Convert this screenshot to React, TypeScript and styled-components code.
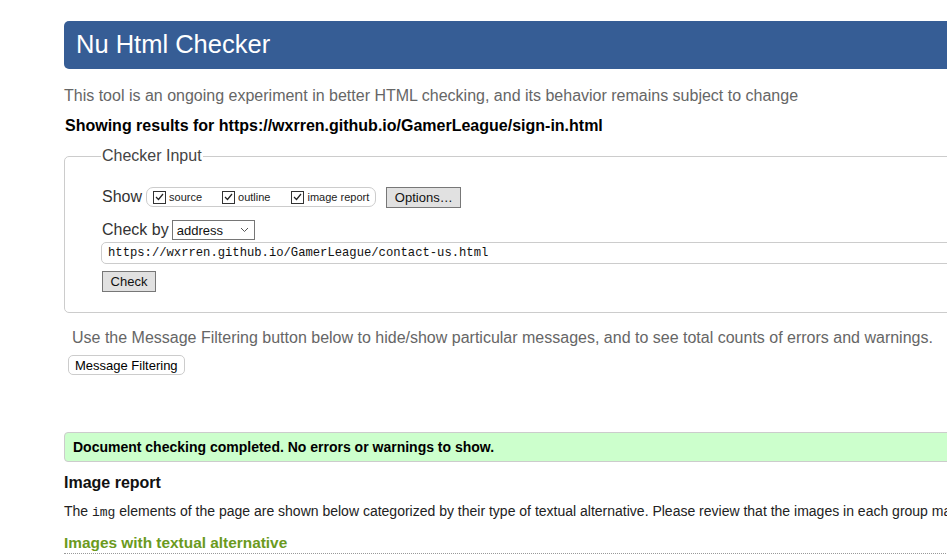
import React from "react";
import styled, { createGlobalStyle } from "styled-components";

const Global = createGlobalStyle`
  html, body { margin: 0; padding: 0; background: #fff; overflow: hidden; }
  body { font-family: "Liberation Sans", Arial, sans-serif; color: #000; }
`;

const Page = styled.div`
  width: 1100px;
  padding: 21px 0 0 64px;
  box-sizing: border-box;
`;

const Header = styled.h1`
  margin: 0;
  height: 48px;
  background: #365d95;
  border-radius: 5px;
  color: #fff;
  font-weight: normal;
  font-size: 25.5px;
  line-height: 46px;
  padding-left: 12px;
`;

const Intro = styled.p`
  margin: 17px 0 0;
  color: #666;
  font-size: 16px;
  line-height: 20px;
`;

const ResultsFor = styled.p`
  margin: 10px 0 0 1px;
  font-weight: bold;
  font-size: 16px;
  line-height: 20px;
`;

const Fieldset = styled.fieldset`
  margin: 11px 0 0;
  padding: 12px 0 19px 37px;
  border: 1px solid #ccc;
  border-radius: 5px;
  height: 166px;
  box-sizing: border-box;
`;

const Legend = styled.legend`
  margin-left: -1px;
  padding: 0 1px;
  font-size: 16px;
  color: #444;
  line-height: 18px;
`;

const Row = styled.div<{ $mt?: number }>`
  display: flex;
  align-items: center;
  margin-top: ${(p) => p.$mt ?? 0}px;
  height: 22px;
`;

const Label = styled.span<{ $mr?: number }>`
  font-size: 16px;
  color: #333;
  margin-right: ${(p) => p.$mr ?? 4}px;
  line-height: 20px;
`;

const CheckGroup = styled.span`
  display: inline-flex;
  align-items: center;
  border: 1px solid #ccc;
  border-radius: 7px;
  height: 18px;
  padding: 0 6px;
`;

const CheckItem = styled.label<{ $gap?: number }>`
  display: inline-flex;
  align-items: center;
  font-size: 11px;
  color: #222;
  margin-right: ${(p) => p.$gap ?? 0}px;
`;

const Box = styled.span`
  width: 11px;
  height: 11px;
  border: 1px solid #333;
  margin-right: 3px;
  display: inline-flex;
  align-items: center;
  justify-content: center;
  background: #fff;
`;

const GrayButton = styled.button<{ $ml?: number; $w: number }>`
  margin-left: ${(p) => p.$ml ?? 0}px;
  width: ${(p) => p.$w}px;
  height: 21px;
  background: #e1e1e1;
  border: 1px solid #777;
  border-radius: 0;
  font-family: "Liberation Sans", Arial, sans-serif;
  font-size: 13px;
  color: #111;
  padding: 0;
`;

const Select = styled.span`
  display: inline-flex;
  align-items: center;
  justify-content: space-between;
  width: 83px;
  height: 20px;
  box-sizing: border-box;
  border: 1px solid #767676;
  padding: 0 5px 0 4px;
  font-size: 13px;
  color: #111;
`;

const UrlInput = styled.div`
  margin-top: 1px;
  margin-left: -1px;
  height: 22px;
  box-sizing: border-box;
  border: 1px solid #ccc;
  border-radius: 5px;
  font-family: "Liberation Mono", "DejaVu Sans Mono", monospace;
  font-size: 12.2px;
  color: #111;
  display: flex;
  align-items: center;
  padding-left: 6px;
`;

const Hint = styled.p`
  margin: 15px 0 0 8px;
  color: #666;
  font-size: 16px;
  line-height: 20px;
`;

const PillButton = styled.button`
  margin: 7px 0 0 4px;
  height: 20px;
  padding: 0 6px;
  background: #fff;
  border: 1px solid #ccc;
  border-radius: 5px;
  font-family: "Liberation Sans", Arial, sans-serif;
  font-size: 13px;
  color: #000;
`;

const Success = styled.div`
  margin-top: 57px;
  height: 30px;
  box-sizing: border-box;
  background: #ccffcc;
  border: 1px solid #ccc;
  border-radius: 4px;
  padding-left: 8px;
  display: flex;
  align-items: center;
  font-weight: bold;
  font-size: 14px;
`;

const H2 = styled.h2`
  margin: 11px 0 0;
  font-size: 16px;
  font-weight: bold;
  line-height: 20px;
  color: #111;
`;

const Para = styled.p`
  margin: 9px 0 0;
  font-size: 14px;
  line-height: 18px;
  color: #222;
  white-space: nowrap;
`;

const Code = styled.code`
  font-family: "Liberation Mono", "DejaVu Sans Mono", monospace;
  font-size: 13px;
`;

const H3 = styled.h3`
  margin: 12px 0 0;
  font-size: 15.4px;
  font-weight: bold;
  color: #6b9a1d;
  line-height: 18px;
  padding-bottom: 1px;
  border-bottom: 1px dotted #999;
`;

const Tick = () => (
  <svg width="9" height="8" viewBox="0 0 9 8">
    <path d="M1 4 L3.5 6.5 L8 1" fill="none" stroke="#222" strokeWidth="1.2" />
  </svg>
);

const Chevron = () => (
  <svg width="9" height="6" viewBox="0 0 9 6">
    <path d="M1 1 L4.5 4.5 L8 1" fill="none" stroke="#555" strokeWidth="1" />
  </svg>
);

export default function App() {
  return (
    <Page>
      <Global />
      <Header>Nu Html Checker</Header>
      <Intro>
        This tool is an ongoing experiment in better HTML checking, and its behavior remains subject to change
      </Intro>
      <ResultsFor>Showing results for https://wxrren.github.io/GamerLeague/sign-in.html</ResultsFor>
      <Fieldset>
        <Legend>Checker Input</Legend>
        <Row $mt={9}>
          <Label>Show</Label>
          <CheckGroup>
            <CheckItem $gap={20}>
              <Box><Tick /></Box>source
            </CheckItem>
            <CheckItem $gap={21}>
              <Box><Tick /></Box>outline
            </CheckItem>
            <CheckItem>
              <Box><Tick /></Box>image report
            </CheckItem>
          </CheckGroup>
          <GrayButton $ml={10} $w={75}>Options…</GrayButton>
        </Row>
        <Row $mt={11}>
          <Label $mr={3}>Check by</Label>
          <Select>
            address
            <Chevron />
          </Select>
        </Row>
        <UrlInput>https://wxrren.github.io/GamerLeague/contact-us.html</UrlInput>
        <Row $mt={6}>
          <GrayButton $w={54}>Check</GrayButton>
        </Row>
      </Fieldset>
      <Hint>
        Use the Message Filtering button below to hide/show particular messages, and to see total counts of errors and warnings.
      </Hint>
      <PillButton>Message Filtering</PillButton>
      <Success>Document checking completed. No errors or warnings to show.</Success>
      <H2>Image report</H2>
      <Para>
        The <Code>img</Code> elements of the page are shown below categorized by their type of textual alternative. Please review that the images in each group make sense.
      </Para>
      <H3>Images with textual alternative</H3>
    </Page>
  );
}
